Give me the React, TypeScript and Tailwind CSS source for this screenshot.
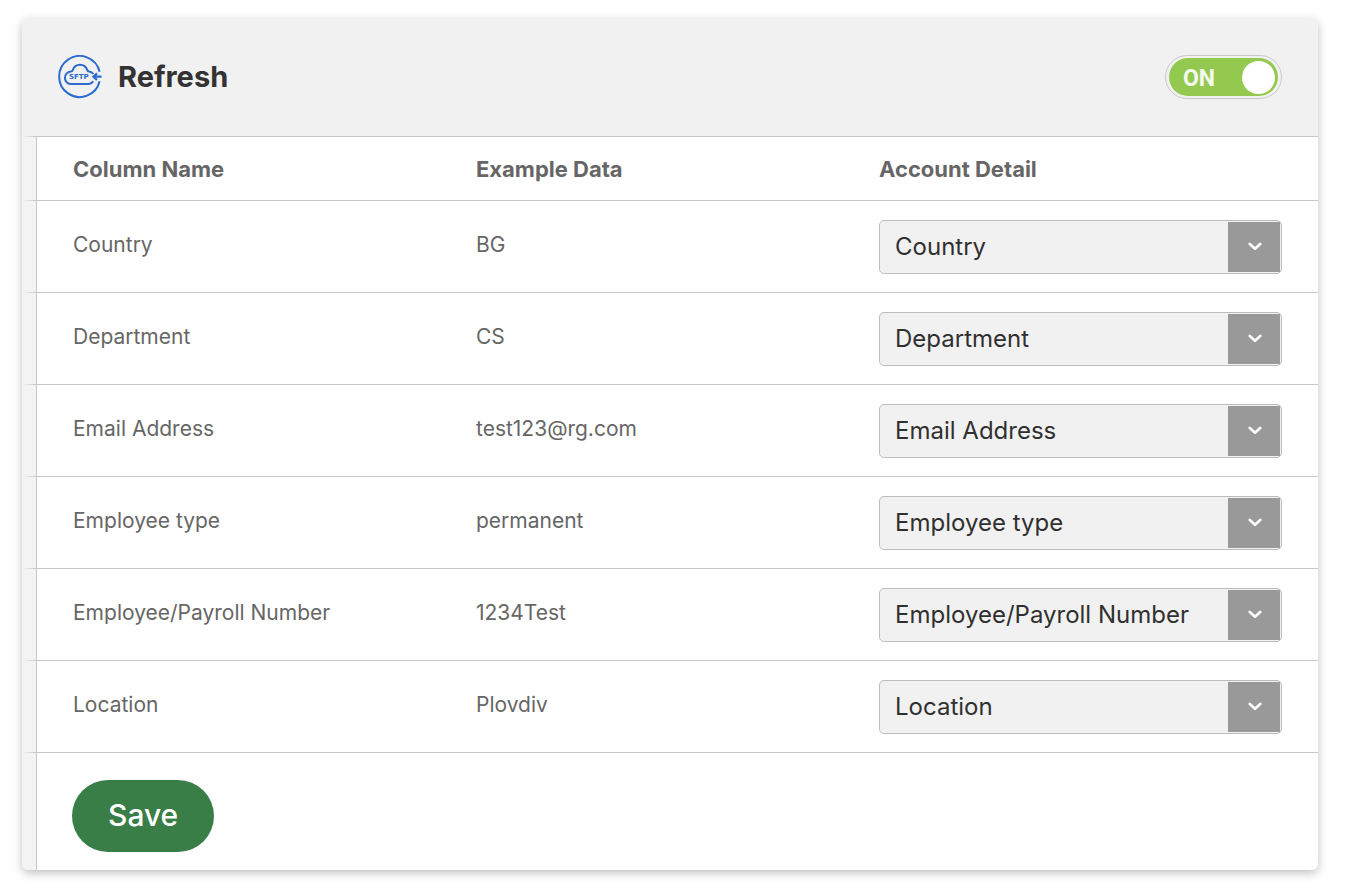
import { useState } from 'react';

interface Mapping {
  column: string;
  example: string;
}

const MAPPINGS: Mapping[] = [
  { column: 'Country', example: 'BG' },
  { column: 'Department', example: 'CS' },
  { column: 'Email Address', example: 'test123@rg.com' },
  { column: 'Employee type', example: 'permanent' },
  { column: 'Employee/Payroll Number', example: '1234Test' },
  { column: 'Location', example: 'Plovdiv' },
];

const ACCOUNT_DETAILS = MAPPINGS.map((m) => m.column);

function SftpIcon() {
  return (
    <svg viewBox="0 0 44 44" className="size-11 shrink-0" fill="none" stroke="#2d6bcf" strokeWidth="2" aria-hidden="true">
      <path d="M41.6 16.8A20.5 20.5 0 1 0 41.6 26.2" />
      <path d="M35.2 26.2a5.6 5.6 0 0 1-4.4 2.8H13.4a6.2 6.2 0 0 1-.6-12.4c.9 0 1.6-.3 1.9-1.3 1-3.3 3.8-5.6 7.3-5.6 3.6 0 6.3 2.2 7.3 5.4.3 1 .8 1.3 1.8 1.5 1.9.3 3.3 1.1 4.2 2.4" />
      <path d="M43.5 21.7H36M39 18.4 35.4 21.7l3.6 3.3" strokeWidth="2.2" />
      <text x="11" y="24.4" className="font-['DejaVu_Sans',sans-serif]" fontSize="7" fontWeight="700" fill="#2d6bcf" stroke="none">SFTP</text>
    </svg>
  );
}

function Toggle() {
  const [on, setOn] = useState(true);

  return (
    <label className="flex cursor-pointer rounded-full border border-[#c8c8c8] px-[3px] py-[2px]">
      <input
        type="checkbox"
        role="switch"
        className="sr-only"
        checked={on}
        onChange={(e) => setOn(e.target.checked)}
      />
      <span className={`flex h-[38px] w-[109px] items-center justify-between rounded-full pr-[3px] pl-[14px] ${on ? 'bg-[#94c94f]' : 'flex-row-reverse bg-[#999999]'}`}>
        <span className="pt-[3px] font-['Roboto',sans-serif] text-[23px] leading-none font-bold text-white/90">{on ? 'ON' : 'OFF'}</span>
        <span className="size-[33px] rounded-full bg-white" />
      </span>
    </label>
  );
}

function DetailSelect({ label, value }: { label: string; value: string }) {
  return (
    <div className="grid grid-cols-[1fr_52px] rounded-[5px] border border-[#bdbdbd] bg-[#f1f1f1] p-px">
      <select
        aria-label={`Account detail for ${label}`}
        defaultValue={value}
        className="col-span-2 col-start-1 row-start-1 h-[52px] -my-px w-full appearance-none bg-transparent pt-px pl-[14px] text-[24px] text-[#303030]"
      >
        {ACCOUNT_DETAILS.map((d) => <option key={d}>{d}</option>)}
      </select>
      <span className="pointer-events-none col-start-2 row-start-1 flex items-center justify-center bg-[#999999]">
        <svg viewBox="0 0 14 9" className="ml-px h-[9px] w-[14px]" fill="none" stroke="white" strokeWidth="2.6" strokeLinecap="round" strokeLinejoin="round">
          <path d="M1.8 2 7 6.8 12.2 2" />
        </svg>
      </span>
    </div>
  );
}

/** Narrow strip left of each row; the row line fades out across it. */
function Gutter() {
  return (
    <td className="border-r border-[#c8c8c8] bg-[#f3f3f3] bg-[linear-gradient(to_right,#f3f3f3,#c8c8c8)] bg-[length:100%_1px] bg-bottom bg-no-repeat p-0" />
  );
}

export default function App() {
  return (
    <main className="bg-white pt-[18px] pr-[34px] pb-6 pl-[22px] font-['Inter',sans-serif]">
      <form
        className="overflow-hidden rounded-md bg-white shadow-[0_3px_10px_rgba(0,0,0,0.25)]"
        onSubmit={(e) => e.preventDefault()}
      >
        <header className="flex h-[119px] items-center justify-between bg-[#f1f1f1] bg-[linear-gradient(to_right,#f1f1f1,#c8c8c8_14px)] bg-[length:100%_1px] bg-bottom bg-no-repeat px-9 pb-px">
          <div className="flex items-center gap-4 pb-px">
            <SftpIcon />
            <h1 className="text-[29px] font-bold text-[#333333]">Refresh</h1>
          </div>
          <Toggle />
        </header>

        <table className="w-full table-fixed border-separate border-spacing-0 text-left text-[21px] text-[#666666]">
          <colgroup>
            <col className="w-[15px]" />
            <col />
            <col className="w-[31.1%]" />
            <col />
          </colgroup>
          <thead>
            <tr className="h-16 text-[22px]">
              <Gutter />
              <th className="border-b border-[#c8c8c8] p-0 pt-0.5 pl-9 font-bold">Column Name</th>
              <th className="border-b border-[#c8c8c8] p-0 pt-0.5 font-bold">Example Data</th>
              <th className="border-b border-[#c8c8c8] p-0 pt-0.5 pr-9 font-bold">Account Detail</th>
            </tr>
          </thead>
          <tbody>
            {MAPPINGS.map((m) => (
              <tr key={m.column} className="h-[92px]">
                <Gutter />
                <td className="border-b border-[#c8c8c8] p-0 pb-1 pl-9">{m.column}</td>
                <td className="border-b border-[#c8c8c8] p-0 pb-1">{m.example}</td>
                <td className="border-b border-[#c8c8c8] p-0 pr-9">
                  <DetailSelect label={m.column} value={m.column} />
                </td>
              </tr>
            ))}
          </tbody>
        </table>

        <footer className="flex">
          <div className="w-[15px] shrink-0 border-r border-[#c8c8c8] bg-[#f3f3f3]" />
          <div className="pt-[27px] pb-[18px] pl-[35px]">
            <button type="submit" className="h-[72px] rounded-full bg-[#387e46] px-9 pb-0.5 text-[30px] font-medium text-white">
              Save
            </button>
          </div>
        </footer>
      </form>
    </main>
  );
}
